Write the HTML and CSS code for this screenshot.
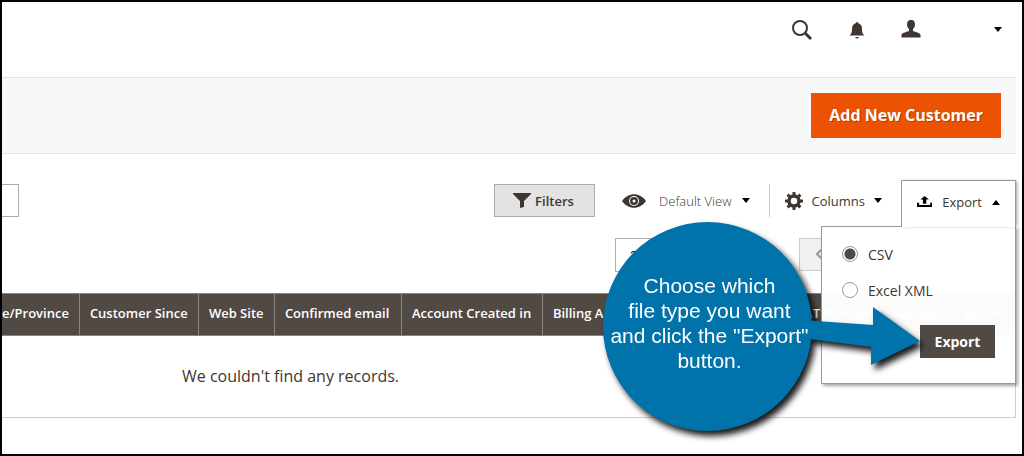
FILE: index.html
```
<!DOCTYPE html>
<html lang="en">
<head>
    <meta charset="UTF-8">
    <meta name="viewport" content="width=device-width, initial-scale=1.0">
    <title>Customers</title>
    <link rel="stylesheet" href="styles.css">
</head>
<body>
    <header class="page-header">
        <button type="button" class="icon-btn" aria-label="Search">
            <svg width="22" height="22" viewBox="0 0 22 22"><circle cx="9" cy="9" r="7" fill="none" stroke="#41362f" stroke-width="2"/><path d="M14 14l6 6" stroke="#41362f" stroke-width="3"/></svg>
        </button>
        <button type="button" class="icon-btn" aria-label="Notifications">
            <svg width="16" height="18" viewBox="0 0 16 18"><path d="M7 2q0-1 1-1t1 1c3 1 4 3 4 6 0 4 1 5 2.500 6.500H.5C2 13 3 12 3 8c0-3 1-5 4-6zM6 16h4q-2 3-4 0z" fill="#41362f"/></svg>
        </button>
        <button type="button" class="icon-btn account" aria-label="Account">
            <svg width="20" height="20" viewBox="0 0 20 20"><path d="M10 0c3 0 4 2 4 4.500 0 2-1 3.500-2 4.500v2c3 1 7.500 2 7.500 4v2.500H.5V15c0-2 4.500-3 7.500-4V9C7 8 6 6.500 6 4.500 6 2 7 0 10 0z" fill="#41362f"/></svg>
            <span class="caret"></span>
        </button>
    </header>
    <div class="page-actions">
        <button type="button" class="primary">Add New Customer</button>
    </div>
    <main class="content">
        <div class="toolbar">
            <input type="text" class="search" aria-label="Search by keyword">
            <button type="button" class="filters">
                <svg width="18" height="15" viewBox="0 0 18 15"><path d="M0 0h18v1l-7 7v6l-4 1V8L0 1z" fill="#41362f"/></svg>
                Filters
            </button>
            <button type="button" class="tool view">
                <svg width="24" height="14" viewBox="0 0 24 14"><path d="M0 7c6-9 18-9 24 0-6 9-18 9-24 0z" fill="#41362f"/><circle cx="12" cy="7" r="5" fill="#fff"/><circle cx="12" cy="7" r="4" fill="#41362f"/><circle cx="12" cy="7" r="1.500" fill="#fff"/></svg>
                <span>Default View</span>
                <span class="caret"></span>
            </button>
            <button type="button" class="tool columns">
                <svg width="18" height="18" viewBox="0 0 18 18"><g stroke="#41362f"><circle cx="9" cy="9" r="5" fill="none" stroke-width="3.500"/><path d="M9 0v4M9 14v4M0 9h4M14 9h4M2.600 2.600l3 3M12.400 12.400l3 3M2.600 15.400l3-3M12.400 5.600l3-3" stroke-width="3"/></g></svg>
                <span>Columns</span>
                <span class="caret"></span>
            </button>
            <div class="export">
                <button type="button" class="tool export-tab">
                    <svg width="18" height="14" viewBox="0 0 18 14"><path d="M9 0l5 4h-3v5H7V4H4zM0 8h2.500v2.500h13V8H18v5H0z"/></svg>
                    <span>Export</span>
                    <span class="caret up"></span>
                </button>
                <form class="export-menu">
                    <label><input type="radio" name="format" checked> CSV</label>
                    <label><input type="radio" name="format"> Excel XML</label>
                    <button type="button" class="submit">Export</button>
                </form>
            </div>
        </div>
        <div class="pager">
            <select class="per-page" aria-label="Per page"><option>20</option></select>
            <button type="button" class="prev" aria-label="Previous page">
                <svg width="8" height="14" viewBox="0 0 8 14"><path d="M7 1L1 7l6 6" fill="none" stroke="#999" stroke-width="2"/></svg>
            </button>
        </div>
        <div class="grid-wrap">
            <table class="grid">
                <thead>
                    <tr>
                        <th class="state">e/Province</th>
                        <th class="since">Customer Since</th>
                        <th class="site">Web Site</th>
                        <th class="confirmed">Confirmed email</th>
                        <th class="created">Account Created in</th>
                        <th class="rest">Billing A</th>
                        <th>VAT Number</th>
                        <th>Gender</th>
                        <th>Action</th>
                    </tr>
                </thead>
                <tbody>
                    <tr><td colspan="9">We couldn't find any records.</td></tr>
                </tbody>
            </table>
        </div>
    </main>
    <div class="callout">
        <svg class="arrow" width="130" height="80" viewBox="0 0 130 80"><path d="M0 13L71 18V0L118 34 69 58V40L0 31z" fill="#0073ab"/></svg>
        <p class="bubble">Choose which<br>file type you want<br>and click the "Export"<br>button.</p>
    </div>
</body>
</html>
```
FILE: styles.css
```
* {
    box-sizing: border-box;
}
body {
    margin: 0;
    min-height: 100vh;
    padding-right: 6px;
    position: relative;
    overflow: hidden;
    border: 2px solid #000;
    background-color: #fff;
    font-family: 'Open Sans', sans-serif;
    color: #41362f;
}
button {
    font: inherit;
    color: inherit;
    cursor: pointer;
}
.page-header {
    display: flex;
    justify-content: flex-end;
    align-items: center;
    gap: 36px;
    height: 75px;
    padding: 0 14px 20px 0;
}
.icon-btn {
    display: flex;
    align-items: center;
    padding: 0;
    border: none;
    background: none;
}
.account {
    gap: 73px;
}
.caret {
    border: 4px solid transparent;
    border-top: 5px solid #000;
    border-bottom: none;
}
.caret.up {
    border-top: none;
    border-bottom: 5px solid #000;
}
.page-actions {
    display: flex;
    justify-content: flex-end;
    padding: 15px;
    border-top: 1px solid #e3e3e3;
    border-bottom: 1px solid #e3e3e3;
    background-color: #f8f8f8;
}
.primary {
    height: 45px;
    padding: 0 18px 2px;
    border: none;
    background-color: #eb5202;
    color: #fff;
    font-size: 16px;
    font-weight: 700;
    text-shadow: 1px 1px 0 rgba(0, 0, 0, 0.25);
}
.toolbar {
    display: flex;
    align-items: flex-start;
    margin-top: 26px;
    height: 46px;
    font-size: 13px;
}
.search {
    width: 17px;
    height: 33px;
    margin: 4px auto 0 0;
    border: 1px solid #adadad;
    border-left: none;
}
.filters {
    display: flex;
    align-items: center;
    gap: 4px;
    height: 33px;
    width: 101px;
    margin-top: 4px;
    padding: 0 18px;
    border: 1px solid #adadad;
    background-color: #e3e3e3;
    font-weight: 600;
}
.tool {
    display: flex;
    align-items: center;
    height: 33px;
    margin-top: 4px;
    border: none;
    background: none;
}
.view {
    gap: 10px;
    padding: 0 19px 0 27px;
    border-right: 1px solid #ccc;
    font-weight: 300;
}
.view svg {
    margin-right: 3px;
}
.columns {
    gap: 9px;
    padding: 0 19px 0 15px;
}
.export {
    position: relative;
    width: 115px;
    height: 46px;
}
.export-tab {
    position: relative;
    z-index: 2;
    gap: 10px;
    width: 100%;
    height: 47px;
    margin: 0;
    padding: 0 15px 4px;
    border: 1px solid #999;
    border-bottom: none;
    background-color: #fff;
    box-shadow: 2px 0 3px -1px rgba(0, 0, 0, 0.4);
}
.export-menu {
    position: absolute;
    z-index: 1;
    top: 46px;
    right: 0;
    display: flex;
    flex-direction: column;
    gap: 10px;
    width: 195px;
    padding: 14px 20px 25px;
    border: 1px solid #999;
    background-color: rgba(255, 255, 255, 0.98);
    box-shadow: 2px 2px 3px rgba(0, 0, 0, 0.35);
    font-size: 14px;
}
.export-menu label {
    display: flex;
    align-items: center;
    gap: 10px;
    height: 26px;
}
.export-menu input {
    appearance: none;
    width: 16px;
    height: 16px;
    margin: 0;
    border: 1px solid #999;
    border-radius: 50%;
    background-color: #fff;
}
.export-menu input:checked {
    background: radial-gradient(circle, #514943 5px, #fff 6px);
}
.submit {
    align-self: flex-end;
    width: 75px;
    height: 33px;
    margin-top: 12px;
    border: none;
    background-color: #514943;
    color: #fff;
    font-weight: 700;
}
.pager {
    display: flex;
    justify-content: flex-end;
    gap: 100px;
    margin-top: 12px;
    padding-right: 133px;
}
.per-page {
    width: 84px;
    height: 34px;
    padding: 0 10px;
    border: 1px solid #adadad;
    background-color: #fff;
}
.prev {
    width: 84px;
    height: 33px;
    padding: 0 16px;
    border: 1px solid #ccc;
    background-color: #f0f0f0;
    text-align: left;
}
.grid-wrap {
    margin-top: 21px;
    border: 1px solid #ccc;
    border-width: 0 1px 1px 0;
}
.grid {
    width: 100%;
    border-collapse: collapse;
    white-space: nowrap;
}
.grid th {
    height: 42px;
    padding: 0 10px 4px;
    border: 1px solid #8a837f;
    border-width: 1px 1px 1px 0;
    background-color: #514943;
    color: #fff;
    font-size: 13px;
    font-weight: 600;
    text-align: left;
}
.grid .state {
    min-width: 77px;
    padding-left: 0;
}
.grid .since {
    min-width: 119px;
}
.grid .site {
    min-width: 76px;
}
.grid .confirmed {
    min-width: 127px;
}
.grid .created {
    min-width: 141px;
}
.grid .rest {
    width: 100%;
}
.grid td {
    height: 81px;
    padding: 0 0 0 180px;
    font-size: 16px;
}
.callout {
    position: absolute;
    z-index: 3;
    top: 220px;
    right: 102px;
    width: 317px;
    filter: drop-shadow(4px 5px 3px rgba(0, 0, 0, 0.9));
    pointer-events: none;
}
.bubble {
    position: relative;
    display: flex;
    align-items: center;
    justify-content: center;
    width: 209px;
    height: 209px;
    margin: 0;
    padding: 0 0 8px 4px;
    border-radius: 50%;
    background-color: #0073ab;
    color: #fff;
    font-family: 'Liberation Sans', sans-serif;
    font-size: 21px;
    line-height: 25px;
    text-align: center;
    white-space: nowrap;
}
.arrow {
    position: absolute;
    top: 85px;
    right: -12px;
}
```
